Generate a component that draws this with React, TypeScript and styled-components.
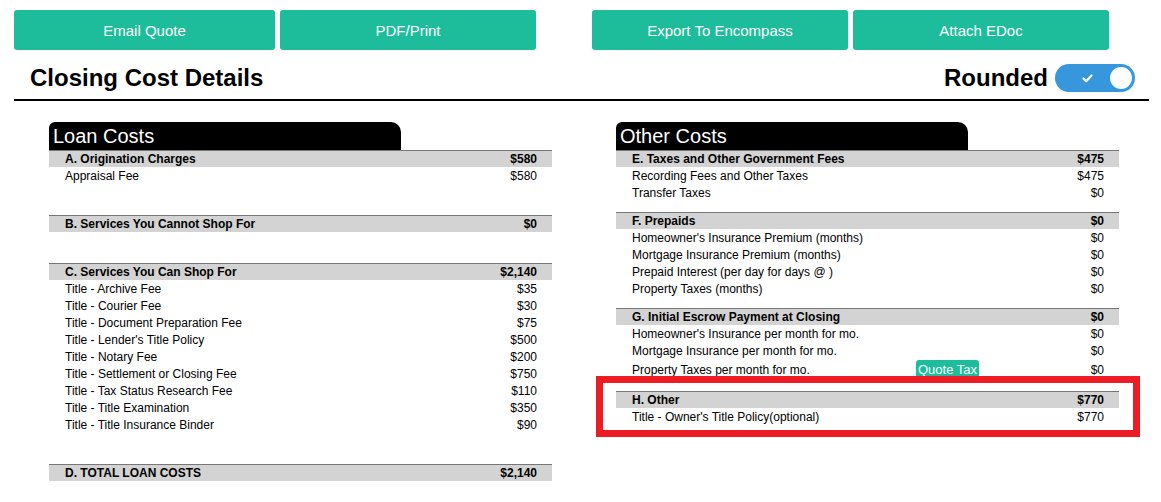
import React, { useState } from "react";
import styled, { createGlobalStyle } from "styled-components";

const GlobalStyle = createGlobalStyle`
  body {
    margin: 0;
    background: #fff;
    font-family: "Liberation Sans", Arial, sans-serif;
    color: #000;
  }
`;

const Page = styled.div`
  width: 1161px;
  padding: 10px 0 0 14px;
  box-sizing: border-box;
`;

const Toolbar = styled.div`
  display: flex;
  gap: 56px;
`;

const ButtonGroup = styled.div`
  display: flex;
  gap: 5px;
`;

const ActionButton = styled.button<{ $width: number }>`
  width: ${({ $width }) => $width}px;
  height: 40px;
  border: none;
  border-radius: 3px;
  background: #1dbd9c;
  color: #fff;
  font-family: "Liberation Sans", Arial, sans-serif;
  font-size: 15px;
  cursor: pointer;
`;

const HeaderBar = styled.div`
  box-sizing: border-box;
  width: 1135px;
  height: 51px;
  padding: 7px 14px 0 16px;
  display: flex;
  align-items: center;
  justify-content: space-between;
  border-bottom: 2px solid #000;
`;

const Title = styled.h1`
  margin: 0;
  font-size: 24px;
  font-weight: bold;
`;

const RoundedControl = styled.div`
  display: flex;
  align-items: center;
  gap: 7px;
  font-size: 24px;
  font-weight: bold;
`;

const Toggle = styled.button<{ $on: boolean }>`
  position: relative;
  width: 80px;
  height: 28px;
  border: none;
  border-radius: 14px;
  background: ${({ $on }) => ($on ? "#3797dd" : "#c8c8c8")};
  padding: 0;
  cursor: pointer;
`;

const Knob = styled.span<{ $on: boolean }>`
  position: absolute;
  top: 3px;
  left: ${({ $on }) => ($on ? "55px" : "3px")};
  width: 22px;
  height: 22px;
  border-radius: 50%;
  background: #fff;
`;

const CheckMark = styled.svg`
  position: absolute;
  left: 27px;
  top: 10px;
`;

const Columns = styled.div`
  display: grid;
  grid-template-columns: 567px 567px;
  margin-top: 21px;
`;

const Panel = styled.div`
  margin-left: 35px;
  width: 503px;
`;

const Tab = styled.div`
  width: 348px;
  height: 28px;
  padding-left: 4px;
  background: #000;
  color: #fff;
  font-size: 20px;
  line-height: 29px;
  border-radius: 6px 10px 0 0;
`;

const Section = styled.div<{ $gap: number }>`
  position: relative;
  margin-bottom: ${({ $gap }) => $gap}px;
  font-size: 12px;
`;

const SectionHead = styled.div`
  display: flex;
  justify-content: space-between;
  height: 16px;
  line-height: 16px;
  padding: 0 15px 0 16px;
  background: #d3d3d3;
  border-top: 1px solid #777;
  font-weight: bold;
`;

const Row = styled.div<{ $tall?: boolean }>`
  display: grid;
  grid-template-columns: 284px 1fr auto;
  align-items: center;
  height: ${({ $tall }) => ($tall ? "21px" : "17px")};
  padding: 0 15px 0 16px;
`;

const Amount = styled.span`
  text-align: right;
`;

const SmallButton = styled.button`
  justify-self: start;
  height: 20px;
  padding: 0 2px;
  border: none;
  border-radius: 3px;
  background: #1dbd9c;
  color: #fff;
  font-family: "Liberation Sans", Arial, sans-serif;
  font-size: 13px;
  cursor: pointer;
`;

const Highlight = styled.div`
  position: absolute;
  left: -20px;
  right: -21px;
  top: -15px;
  bottom: -12px;
  border: 7px solid #ed1c24;
  pointer-events: none;
`;

type Item = { label: string; amount: string; action?: string };
type CostSection = { title: string; total: string; items: Item[]; marked?: boolean };

const loanCosts: CostSection[] = [
  { title: "A. Origination Charges", total: "$580", items: [{ label: "Appraisal Fee", amount: "$580" }] },
  { title: "B. Services You Cannot Shop For", total: "$0", items: [] },
  {
    title: "C. Services You Can Shop For",
    total: "$2,140",
    items: [
      { label: "Title - Archive Fee", amount: "$35" },
      { label: "Title - Courier Fee", amount: "$30" },
      { label: "Title - Document Preparation Fee", amount: "$75" },
      { label: "Title - Lender's Title Policy", amount: "$500" },
      { label: "Title - Notary Fee", amount: "$200" },
      { label: "Title - Settlement or Closing Fee", amount: "$750" },
      { label: "Title - Tax Status Research Fee", amount: "$110" },
      { label: "Title - Title Examination", amount: "$350" },
      { label: "Title - Title Insurance Binder", amount: "$90" },
    ],
  },
  { title: "D. TOTAL LOAN COSTS", total: "$2,140", items: [] },
];

const otherCosts: CostSection[] = [
  {
    title: "E. Taxes and Other Government Fees",
    total: "$475",
    items: [
      { label: "Recording Fees and Other Taxes", amount: "$475" },
      { label: "Transfer Taxes", amount: "$0" },
    ],
  },
  {
    title: "F. Prepaids",
    total: "$0",
    items: [
      { label: "Homeowner's Insurance Premium (months)", amount: "$0" },
      { label: "Mortgage Insurance Premium (months)", amount: "$0" },
      { label: "Prepaid Interest (per day for days @ )", amount: "$0" },
      { label: "Property Taxes (months)", amount: "$0" },
    ],
  },
  {
    title: "G. Initial Escrow Payment at Closing",
    total: "$0",
    items: [
      { label: "Homeowner's Insurance per month for mo.", amount: "$0" },
      { label: "Mortgage Insurance per month for mo.", amount: "$0" },
      { label: "Property Taxes per month for mo.", amount: "$0", action: "Quote Tax" },
    ],
  },
  {
    title: "H. Other",
    total: "$770",
    marked: true,
    items: [{ label: "Title - Owner's Title Policy(optional)", amount: "$770" }],
  },
];

const CostPanel = ({ title, sections, gap }: { title: string; sections: CostSection[]; gap: number }) => (
  <Panel>
    <Tab>{title}</Tab>
    {sections.map((s) => (
      <Section key={s.title} $gap={gap}>
        <SectionHead>
          <span>{s.title}</span>
          <span>{s.total}</span>
        </SectionHead>
        {s.items.map((item) => (
          <Row key={item.label} $tall={!!item.action}>
            <span>{item.label}</span>
            {item.action ? <SmallButton>{item.action}</SmallButton> : <span />}
            <Amount>{item.amount}</Amount>
          </Row>
        ))}
        {s.marked && <Highlight />}
      </Section>
    ))}
  </Panel>
);

const App = () => {
  const [rounded, setRounded] = useState(true);

  return (
    <Page>
      <GlobalStyle />
      <Toolbar>
        <ButtonGroup>
          <ActionButton $width={261}>Email Quote</ActionButton>
          <ActionButton $width={256}>PDF/Print</ActionButton>
        </ButtonGroup>
        <ButtonGroup>
          <ActionButton $width={256}>Export To Encompass</ActionButton>
          <ActionButton $width={256}>Attach EDoc</ActionButton>
        </ButtonGroup>
      </Toolbar>
      <HeaderBar>
        <Title>Closing Cost Details</Title>
        <RoundedControl>
          Rounded
          <Toggle $on={rounded} onClick={() => setRounded(!rounded)}>
            {rounded && (
              <CheckMark width="11" height="9" viewBox="0 0 11 9">
                <path d="M1.5 4.5 L4.2 7.2 L9.5 1.5" fill="none" stroke="#fff" strokeWidth="2.2" strokeLinecap="round" strokeLinejoin="round" />
              </CheckMark>
            )}
            <Knob $on={rounded} />
          </Toggle>
        </RoundedControl>
      </HeaderBar>
      <Columns>
        <CostPanel title="Loan Costs" sections={loanCosts} gap={31} />
        <CostPanel title="Other Costs" sections={otherCosts} gap={11} />
      </Columns>
    </Page>
  );
};

export default App;
